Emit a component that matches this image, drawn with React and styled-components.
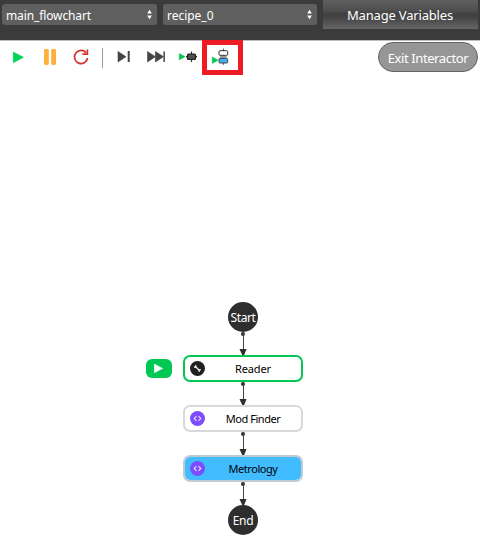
import React from "react";
import styled, { createGlobalStyle } from "styled-components";

const GlobalStyle = createGlobalStyle`
  * { box-sizing: border-box; }
  body { margin: 0; background: #fff; }
  button { margin: 0; padding: 0; font: inherit; }
  svg { display: block; flex: none; }
`;

const Page = styled.main`
  display: flex;
  flex-direction: column;
  width: 480px;
  height: 548px;
  overflow: hidden;
  background: #fff;
  font-family: "Noto Sans", "Open Sans", sans-serif;
`;

const Header = styled.header`
  display: flex;
  align-items: flex-start;
  height: 41px;
  padding-left: 2px;
  background: #3b3b3b;
  border-bottom: 1px solid #bdbdbd;
`;

const Select = styled.button`
  display: flex;
  align-items: center;
  justify-content: space-between;
  width: ${(p) => p.$width}px;
  height: 21px;
  margin: 4px 6px 0 0;
  padding: 0 5px 0 4px;
  border: 0;
  border-radius: 3px;
  background: #5f5f5f;
  color: #fff;
  font-size: 12px;
  line-height: 19px;
  letter-spacing: ${(p) => p.$spacing}px;
`;

const SelectValue = styled.span`
  padding-top: 2px;
`;

const ManageButton = styled.button`
  width: 155px;
  height: 29px;
  padding-right: 1px;
  border: 0;
  background: linear-gradient(#606060 0, #4d4d4d 38%, #404040 48%, #464646 62%, #666 100%);
  color: #fff;
  font-size: 13px;
  line-height: 31px;
  letter-spacing: -0.18px;
`;

const Toolbar = styled.div`
  display: flex;
  align-items: flex-start;
  justify-content: space-between;
  height: 36px;
  padding: 0 2px 0 0;
`;

const Tools = styled.div`
  display: flex;
  align-items: center;
  height: 35px;
  margin-top: -1px;
`;

const Tool = styled.button`
  display: flex;
  align-items: center;
  justify-content: center;
  width: ${(p) => p.$width}px;
  height: 35px;
  border: 0;
  background: transparent;
`;

const HighlightedTool = styled(Tool)`
  border: 5px solid #ed1c24;
  background: #fff;
`;

const Divider = styled.span`
  width: 1px;
  height: 20px;
  margin: 0 4px;
  background: #999;
`;

const ExitButton = styled.button`
  width: 100px;
  height: 30px;
  margin-top: 1px;
  border: 1px solid #636363;
  border-radius: 15px;
  background: #969696;
  color: #fff;
  font-size: 13px;
  line-height: 30px;
  letter-spacing: -0.4px;
`;

const Flow = styled.section`
  display: flex;
  flex-direction: column;
  align-items: center;
  padding: 225px 0 0 6px;
`;

const Terminal = styled.div`
  display: flex;
  align-items: center;
  justify-content: center;
  width: 30px;
  height: 30px;
  border-radius: 50%;
  background: #2e2e2e;
  color: #fff;
  font-size: 12px;
  line-height: 32px;
  letter-spacing: ${(p) => p.$spacing}px;
  white-space: nowrap;

  span {
    padding-top: 2px;
  }
`;

const tones = {
  active: { border: "#00c853", fill: "#fff" },
  plain: { border: "#d9d9d9", fill: "#fff" },
  selected: { border: "#bfcbd2", fill: "#40bcff" },
};

const Step = styled.div`
  position: relative;
  display: flex;
  align-items: center;
  width: 120px;
  height: 27px;
  padding-left: 5px;
  border: 2px solid ${(p) => tones[p.$tone].border};
  border-radius: 7px;
  background: ${(p) => tones[p.$tone].fill};
  background-clip: padding-box;
`;

const StepLabel = styled.span`
  flex: 1;
  color: #000;
  font-size: 11px;
  line-height: 20px;
  letter-spacing: ${(p) => p.$spacing}px;
  text-align: center;
`;

const RunBadge = styled.span`
  position: absolute;
  left: -39px;
  top: 2px;
  display: flex;
  align-items: center;
  justify-content: center;
  width: 26px;
  height: 19px;
  border-radius: 6px;
  background: #00c853;
`;

const SpinArrows = () => (
  <svg width="5" height="11" viewBox="0 0 5 11" fill="#fff">
    <path d="M2.5.8 4.8 4.6H.2ZM.2 6.4h4.6L2.5 10.2Z" />
  </svg>
);

const PlayIcon = () => (
  <svg width="36" height="35" viewBox="0 0 36 35">
    <path d="M13.4 12.2 23.3 17.3 13.4 22.6Z" fill="#00d45a" stroke="#00d45a" strokeWidth=".8" strokeLinejoin="round" />
  </svg>
);

const PauseIcon = () => (
  <svg width="28" height="35" viewBox="0 0 28 35" fill="#ffb03b">
    <rect x="8" y="9" width="4.8" height="16" rx="1.4" />
    <rect x="15.2" y="9" width="4.8" height="16" rx="1.4" />
  </svg>
);

const ReloadIcon = () => (
  <svg width="34" height="35" viewBox="0 0 34 35" fill="none" stroke="#d63031" strokeWidth="1.7">
    <path d="M22 12.6A6.6 6.6 0 1 0 23.6 18" />
    <path d="M23.4 9.4V14.2H18.4" />
  </svg>
);

const StepIcon = () => (
  <svg width="28" height="35" viewBox="0 0 28 35" fill="#444">
    <path d="M11 11.5 19 16.7 11 22Z" stroke="#444" strokeWidth=".6" />
    <rect x="20.7" y="11" width="2" height="11" />
  </svg>
);

const FastForwardIcon = () => (
  <svg width="34" height="35" viewBox="0 0 34 35" fill="#444">
    <path d="M12.5 11.5 20.4 16.7 12.5 22ZM20.4 11.5 28.6 16.7 20.4 22Z" stroke="#444" strokeWidth=".6" />
    <rect x="28.4" y="11.5" width="1.5" height="10.5" />
  </svg>
);

const RunBlockIcon = () => (
  <svg width="33" height="35" viewBox="0 0 33 35">
    <path d="M10.3 13.6 16 16.7 10.3 19.8Z" fill="#00c853" stroke="#00c853" strokeWidth=".6" />
    <path d="M22.5 11.5V22M17 16.7H28" stroke="#333" strokeWidth="1.2" />
    <rect x="18.5" y="14.2" width="8" height="5.2" rx="1" fill="#505050" stroke="#222" strokeWidth="1.3" />
  </svg>
);

const RunStackIcon = () => (
  <svg width="31" height="25" viewBox="0 0 31 25">
    <path d="M5.3 12 11 15.2 5.3 18.4Z" fill="#00c853" stroke="#00c853" strokeWidth=".6" />
    <path d="M16.5 3.6V19.8" stroke="#555" strokeWidth="1.1" />
    <rect x="13.2" y="10.8" width="6.4" height="2.3" fill="#999" />
    <rect x="12" y="5.7" width="8.7" height="4.6" rx="1" fill="#fff" stroke="#333" />
    <rect x="12" y="13.4" width="8.7" height="4.6" rx="1" fill="#3bb4f2" stroke="#444" />
  </svg>
);

const BadgePlayIcon = () => (
  <svg width="10" height="11" viewBox="0 0 10 11">
    <path d="M.3 1 8.6 5.4.3 9.8Z" fill="#fff" stroke="#fff" strokeWidth=".6" strokeLinejoin="round" />
  </svg>
);

const ToolIcon = () => (
  <svg width="15" height="15" viewBox="0 0 15 15">
    <circle cx="7.5" cy="7.5" r="7.5" fill="#202020" />
    <path d="m5.6 5.8 3.8 3.6" stroke="#fff" strokeWidth="1.3" />
    <path d="M5.7 3.9v2.2H3.9M11.1 8.7H9.1v2.4" fill="none" stroke="#fff" strokeWidth="1.1" />
  </svg>
);

const CodeIcon = () => (
  <svg width="15" height="15" viewBox="0 0 15 15" fill="none">
    <circle cx="7.5" cy="7.5" r="7.5" fill="#7c4dff" />
    <path d="M6.5 5.2 4.2 7.5l2.3 2.3M8.5 5.2l2.3 2.3-2.3 2.3" stroke="#e7ddff" strokeWidth="1.1" />
  </svg>
);

const Connector = () => (
  <svg width="8" height="23" viewBox="0 0 8 23" fill="#2e2e2e">
    <circle cx="4" cy="2" r="2" />
    <path d="M4.5 0V21" stroke="#444" />
    <path d="M.5 17H7.5L5.2 23H3.2Z" />
  </svg>
);

const steps = [
  { label: "Reader", tone: "active", Icon: ToolIcon, spacing: -0.15 },
  { label: "Mod Finder", tone: "plain", Icon: CodeIcon, spacing: -0.45 },
  { label: "Metrology", tone: "selected", Icon: CodeIcon, spacing: -0.45 },
];

export default function App() {
  return (
    <>
      <GlobalStyle />
      <Page>
        <Header>
          <Select $width={155} $spacing={-0.12}><SelectValue>main_flowchart</SelectValue><SpinArrows /></Select>
          <Select $width={154} $spacing={-0.02}><SelectValue>recipe_0</SelectValue><SpinArrows /></Select>
          <ManageButton>Manage Variables</ManageButton>
        </Header>
        <Toolbar>
          <Tools>
            <Tool $width={36} aria-label="Run"><PlayIcon /></Tool>
            <Tool $width={28} aria-label="Pause"><PauseIcon /></Tool>
            <Tool $width={34} aria-label="Restart"><ReloadIcon /></Tool>
            <Divider />
            <Tool $width={28} aria-label="Step"><StepIcon /></Tool>
            <Tool $width={34} aria-label="Fast forward"><FastForwardIcon /></Tool>
            <Tool $width={33} aria-label="Run block"><RunBlockIcon /></Tool>
            <HighlightedTool $width={41} aria-label="Run from block"><RunStackIcon /></HighlightedTool>
          </Tools>
          <ExitButton>Exit Interactor</ExitButton>
        </Toolbar>
        <Flow>
          <Terminal $spacing={-0.4}><span>Start</span></Terminal>
          <Connector />
          {steps.map(({ label, tone, Icon, spacing }) => (
            <React.Fragment key={label}>
              <Step $tone={tone}>
                {tone === "active" && <RunBadge><BadgePlayIcon /></RunBadge>}
                <Icon />
                <StepLabel $spacing={spacing}>{label}</StepLabel>
              </Step>
              <Connector />
            </React.Fragment>
          ))}
          <Terminal $spacing={-0.3}><span>End</span></Terminal>
        </Flow>
      </Page>
    </>
  );
}
